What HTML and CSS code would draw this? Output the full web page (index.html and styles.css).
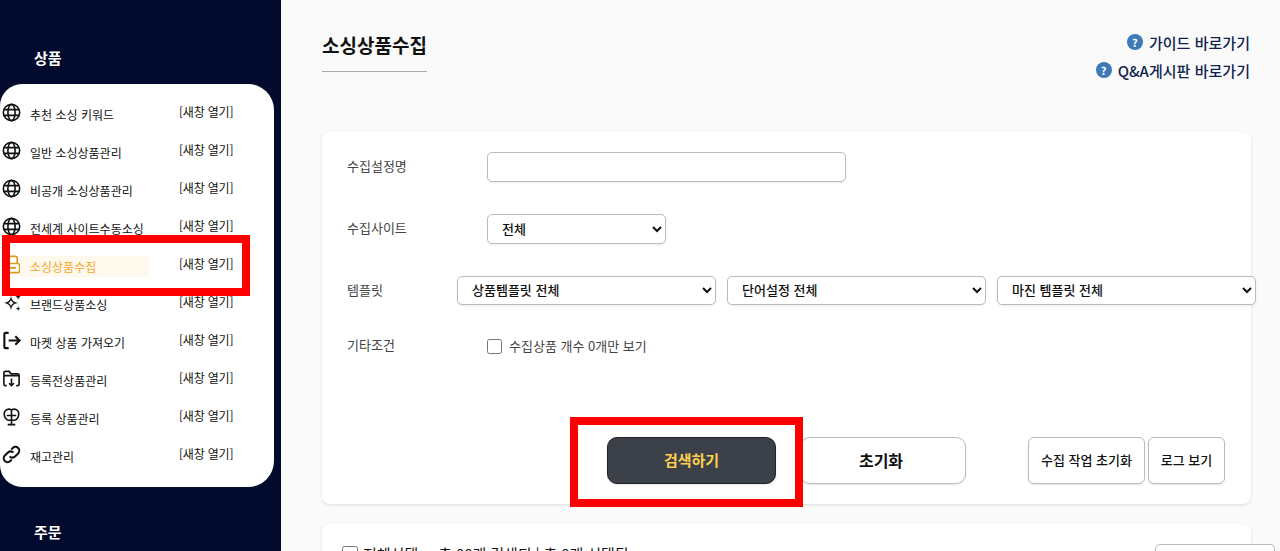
FILE: index.html
```html
<!DOCTYPE html>
<html lang="ko">
<head>
	<meta charset="UTF-8">
	<title>소싱상품수집</title>
	<link rel="stylesheet" href="styles.css">
</head>
<body>
	<svg class="defs" width="0" height="0">
		<symbol id="globe" viewBox="0 0 20 20">
			<circle cx="10" cy="10" r="8.6"/>
			<ellipse cx="10" cy="10" rx="3.8" ry="8.6"/>
			<path d="M2 7h16M2 13h16"/>
		</symbol>
	</svg>
	<div class="page">
		<aside class="side">
			<h2 class="side_title">상품</h2>
			<ul class="menu">
				<li class="menu_item">
					<svg class="ico"><use href="#globe"/></svg>
					<span class="menu_name">추천 소싱 키워드</span><a class="menu_open">[새창 열기]</a>
				</li>
				<li class="menu_item">
					<svg class="ico"><use href="#globe"/></svg>
					<span class="menu_name">일반 소싱상품관리</span><a class="menu_open">[새창 열기]</a>
				</li>
				<li class="menu_item">
					<svg class="ico"><use href="#globe"/></svg>
					<span class="menu_name">비공개 소싱상품관리</span><a class="menu_open">[새창 열기]</a>
				</li>
				<li class="menu_item">
					<svg class="ico"><use href="#globe"/></svg>
					<span class="menu_name">전세계 사이트수동소싱</span><a class="menu_open">[새창 열기]</a>
				</li>
				<li class="menu_item cur">
					<svg class="ico" viewBox="0 0 20 20"><path d="M6 8.500V3.500a2 2 0 0 1 2-2h6a2 2 0 0 1 2 2v5"/><rect x="4" y="9" width="14.500" height="9.500" rx="2"/><path class="thick" d="M8.500 13.500h6"/></svg>
					<span class="menu_name">소싱상품수집</span><a class="menu_open">[새창 열기]</a>
				</li>
				<li class="menu_item">
					<svg class="ico" viewBox="0 0 20 20"><path class="solid" d="M9.500 3c.9 5 2.300 6.600 7.500 7.500-5.200.9-6.600 2.500-7.500 7.500-.9-5-2.300-6.600-7.500-7.500 5.200-.9 6.600-2.500 7.500-7.500zm0 4.400c-.6 1.500-1.500 2.400-3 3.100 1.500.7 2.400 1.600 3 3.100.6-1.500 1.500-2.400 3-3.100-1.500-.7-2.400-1.600-3-3.100z"/><path class="solid" d="M17 1l.8 2.200L20 4l-2.200.8L17 7l-.8-2.200L14 4l2.200-.8zM17 14l.7 1.800 1.800.7-1.800.7L17 19l-.7-1.800-1.800-.7 1.800-.7z"/></svg>
					<span class="menu_name">브랜드상품소싱</span><a class="menu_open">[새창 열기]</a>
				</li>
				<li class="menu_item">
					<svg class="ico" viewBox="0 0 20 20"><path class="thick" d="M7 2H3.500a1 1 0 0 0-1 1v14a1 1 0 0 0 1 1H7M7 10h11.500M14 5.500l4.500 4.500-4.500 4.500"/></svg>
					<span class="menu_name">마켓 상품 가져오기</span><a class="menu_open">[새창 열기]</a>
				</li>
				<li class="menu_item">
					<svg class="ico" viewBox="0 0 20 20"><path d="M5 17.500H3.500a1.500 1.500 0 0 1-1.500-1.500V4a1.500 1.500 0 0 1 1.500-1.500h4l2 2.500h7a1.500 1.500 0 0 1 1.500 1.500V16a1.500 1.500 0 0 1-1.500 1.500H15M2 7h16M10 10v7.500M7.500 15l2.500 2.500 2.500-2.500"/></svg>
					<span class="menu_name">등록전상품관리</span><a class="menu_open">[새창 열기]</a>
				</li>
				<li class="menu_item">
					<svg class="ico" viewBox="0 0 20 20"><path d="M10 3v11M10 3C7 1.500 3 2.500 2.500 6c-.4 3 .5 6 3 7.500.8.500 2.500.5 4.500.5s3.700 0 4.500-.5c2.500-1.500 3.400-4.500 3-7.500C17 2.500 13 1.500 10 3zM5 9h10M10 14v4M6 18.500h8"/></svg>
					<span class="menu_name">등록 상품관리</span><a class="menu_open">[새창 열기]</a>
				</li>
				<li class="menu_item">
					<svg class="ico" viewBox="0 0 20 20"><path class="thick" d="M8 12a4 4 0 0 0 5.700.2l3.300-3.300a4 4 0 0 0-5.700-5.700L9.800 4.700M12 8a4 4 0 0 0-5.700-.2L3 11.100a4 4 0 0 0 5.700 5.700l1.500-1.500"/></svg>
					<span class="menu_name">재고관리</span><a class="menu_open">[새창 열기]</a>
				</li>
			</ul>
			<h2 class="side_title next_title">주문</h2>
		</aside>

		<main class="main">
			<header class="head">
				<h1 class="title">소싱상품수집</h1>
				<div class="guide">
					<a class="guide_link"><i class="q">?</i>가이드 바로가기</a>
					<a class="guide_link"><i class="q">?</i>Q&amp;A게시판 바로가기</a>
				</div>
			</header>

			<section class="card form_card">
				<div class="row">
					<label class="row_label">수집설정명</label>
					<input class="field name_field" type="text">
				</div>
				<div class="row">
					<label class="row_label">수집사이트</label>
					<select class="field site_field"><option>전체</option></select>
				</div>
				<div class="row tpl_row">
					<label class="row_label tpl_label">템플릿</label>
					<select class="field tpl_field"><option>상품템플릿 전체</option></select>
					<select class="field tpl_field"><option>단어설정 전체</option></select>
					<select class="field tpl_field"><option>마진 템플릿 전체</option></select>
				</div>
				<div class="row check_row">
					<label class="row_label">기타조건</label>
					<label class="check"><input class="box" type="checkbox">수집상품 개수 0개만 보기</label>
				</div>
				<div class="btns">
					<button class="btn search">검색하기</button>
					<button class="btn reset">초기화</button>
					<button class="btn small job">수집 작업 초기화</button>
					<button class="btn small log">로그 보기</button>
				</div>
			</section>

			<section class="card list_card">
				<label class="check list_check"><input class="box" type="checkbox">전체선택</label>
				<span class="count">총 00개 검색되 | 총 0개 선택됨</span>
				<select class="field list_select"><option></option></select>
			</section>
		</main>
	</div>
	<div class="mark mark_menu"></div>
	<div class="mark mark_btn"></div>
</body>
</html>
```

FILE: styles.css
```css
*{margin:0;padding:0;box-sizing:border-box;list-style:none;}
html,body{height:551px;overflow:hidden;}
body{font-family:"Noto Sans CJK KR","Noto Sans",sans-serif;background:#fafafa;color:#111;position:relative;}
.defs{position:absolute;}
.page{display:flex;height:551px;overflow:hidden;}

.side{width:281px;flex:none;background:#020a2e;padding:47px 7px 0 0;}
.side_title{font-size:15px;line-height:22px;font-weight:700;color:#fff;padding-left:34px;}
.next_title{margin-top:34px;}
.menu{margin-top:15px;height:403px;background:#fff;border-radius:22px 26px 26px 22px;padding-top:12px;}
.menu_item{display:flex;align-items:center;height:38px;font-size:12px;color:#111;padding-left:2px;}
.ico{width:19px;height:19px;flex:none;fill:none;stroke:#111;stroke-width:1.700;margin-top:-5px;overflow:visible;}
.ico .solid{fill:#111;stroke:none;}
.ico .thick{stroke-width:2.200;}
.menu_name{width:149px;margin-left:9px;line-height:20px;}
.menu_open{letter-spacing:-.2px;margin-top:-7px;}
.cur{color:#efa92a;}
.cur .ico{stroke:#d99a1e;}
.cur .menu_name{background:#fff8ec;line-height:21px;width:129px;margin-left:-1px;padding-left:10px;margin-right:30px;margin-top:-2px;}
.cur .menu_open{color:#111;}

.main{flex:1;padding:0 29px 0 41px;min-width:0;}
.head{display:flex;justify-content:space-between;height:132px;}
.title{margin-top:30px;height:42px;width:105px;font-size:19px;line-height:30px;font-weight:700;color:#111;border-bottom:1px solid #aaa;white-space:nowrap;}
.guide{display:flex;flex-direction:column;align-items:flex-end;padding-top:28px;margin-right:1px;}
.guide_link{display:flex;align-items:center;height:28px;font-size:15px;font-weight:500;color:#10234f;letter-spacing:.03px;}
.q{width:16px;height:16px;margin-right:6px;border-radius:50%;background:#3f7ab8;color:#fff;font-size:11px;line-height:16px;font-weight:700;font-style:normal;text-align:center;}

.card{background:#fff;border-radius:8px;box-shadow:0 1px 3px rgba(0,0,0,.12);}
.form_card{height:372px;padding-top:20px;}
.row{display:flex;align-items:center;height:30px;margin-bottom:32px;padding-left:25px;font-size:13px;color:#444;}
.row_label{width:140px;flex:none;line-height:20px;padding-bottom:2px;}
.field{height:30px;background:#fff;border:1px solid #bbb;border-radius:5px;font-family:inherit;font-size:13px;font-weight:500;color:#111;padding:0 0 2px 10px;box-shadow:0 1px 2px rgba(0,0,0,.08);}
.name_field{width:359px;}
.site_field{width:179px;}
.tpl_row{height:29px;gap:11px;margin-bottom:26px;}
.tpl_label{width:99px;}
.tpl_field{width:259px;height:29px;flex:none;}
.check_row{height:30px;}
.check{display:flex;align-items:center;font-size:13px;color:#444;line-height:20px;}
.box{width:15px;height:15px;margin-right:7px;}

.btns{display:flex;margin-top:76px;padding-left:285px;}
.btn{height:47px;font-family:inherit;background:#fff;border:1px solid #bbb;border-radius:10px;color:#111;box-shadow:0 1px 2px rgba(0,0,0,.1);padding-bottom:2px;}
.search{width:169px;background:#3c4149;border-color:#222;color:#ffcf4d;font-size:15px;font-weight:700;}
.reset{width:166px;margin-left:24px;font-size:16px;font-weight:700;padding-right:4px;}
.small{font-size:13px;font-weight:500;border-radius:6px;}
.job{width:117px;margin-left:62px;}
.log{width:77px;margin-left:3px;}

.list_card{display:flex;align-items:center;height:60px;margin-top:20px;padding:0 0 1px 20px;font-size:15px;}
.list_check{font-size:15px;color:#111;}
.list_check .box{width:16px;height:16px;margin-right:5px;}
.count{margin-left:20px;color:#111;letter-spacing:-.1px;}
.list_select{width:120px;height:30px;margin-left:auto;margin-right:-24px;flex:none;margin-top:11px;}

/* annotation boxes drawn over the screenshot */
.mark{position:absolute;border:8px solid #f00;}
.mark_menu{left:2px;top:235px;width:248px;height:61px;}
.mark_btn{left:570px;top:417px;width:233px;height:90px;}
```
